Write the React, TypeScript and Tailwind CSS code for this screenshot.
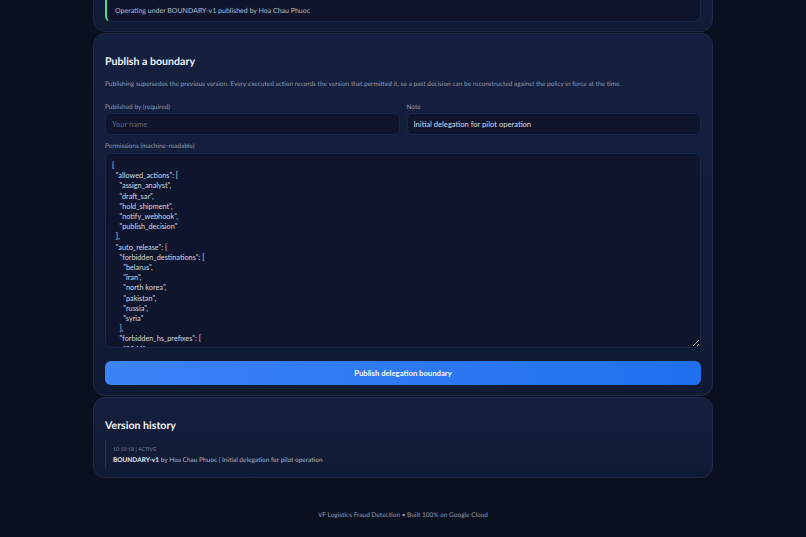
const permissions = `{
  "allowed_actions": [
    "assign_analyst",
    "draft_sar",
    "hold_shipment",
    "notify_webhook",
    "publish_decision"
  ],
  "auto_release": {
    "forbidden_destinations": [
      "belarus",
      "iran",
      "north korea",
      "pakistan",
      "russia",
      "syria"
    ],
    "forbidden_hs_prefixes": [
      "2844",
      "8401"
    ]
  }
}`

const card = "mx-auto w-[620px] shrink-0 rounded-xl border border-[#1e2a4a] bg-gradient-to-b from-[#15203f] to-[#111a33] px-[11px]"
const field = "block h-[22px] w-full rounded-md border border-[#1b2646] bg-[#0e152c] px-[6px] text-[7.6px] text-[#d5dbe6] outline-none placeholder:text-[#5f6b82]"
const label = "block text-[6.5px] leading-[10px] text-[#8f9bb0]"

export default function App() {
  return (
    <div className="flex h-[537px] flex-col justify-end overflow-hidden bg-[#0b1021] font-['Lato',sans-serif] [text-rendering:geometricPrecision]">
      <div className={card + " pb-[9px]"}>
        <div className="flex h-[46px] items-end rounded-md border border-l-2 border-[#1b2646] border-l-[#4ade80] bg-[#0e152c] px-[8px] pb-[5.5px]">
          <span className="text-[7px] leading-[10px] text-[#b4bdcc]">Operating under BOUNDARY-v1 published by Hoa Chau Phuoc</span>
        </div>
      </div>

      <section className={card + " mt-px pb-[10px] pt-[21px]"}>
        <h2 className="text-[10.6px] font-bold leading-[14px] text-[#f1f5f9]">Publish a boundary</h2>
        <p className="mt-[10.5px] text-[6.5px] leading-[10px] text-[#8f9bb0]">
          Publishing supersedes the previous version. Every executed action records the version that permitted it, so a past decision can be reconstructed against the policy in force at the time.
        </p>
        <div className="mt-[13.5px] grid grid-cols-2 gap-[7px]">
          <div>
            <label className={label}>Published by (required)</label>
            <input className={field} placeholder="Your name" />
          </div>
          <div>
            <label className={label}>Note</label>
            <input className={field} defaultValue="Initial delegation for pilot operation" />
          </div>
        </div>
        <label className={label + " mb-px mt-[7px]"}>Permissions (machine-readable)</label>
        <textarea
          readOnly
          defaultValue={permissions}
          className="block h-[195px] w-full resize-y overflow-hidden rounded-md border border-[#1b2646] bg-[#0e152c] px-[6px] pb-[5px] pt-[7px] text-[7.3px] leading-[10.2px] text-[#d5dbe6] outline-none"
        />
        <button className="mt-[13px] h-[24px] w-full rounded-md bg-gradient-to-r from-[#3b82f6] to-[#2070f0] pt-px text-[7.7px] font-bold text-[#f8fafc]">
          Publish delegation boundary
        </button>
      </section>

      <section className={card + " mt-px pb-[9px] pt-[20.5px]"}>
        <h2 className="text-[10.6px] font-bold leading-[14px] text-[#f1f5f9]">Version history</h2>
        <div className="mt-[7.5px] border-l border-[#25304f] pb-[1.5px] pl-[7px] pt-[6px]">
          <div className="text-[5.3px] leading-[8px] text-[#6f7b92]">10:19:18 | ACTIVE</div>
          <div className="mt-[0.5px] text-[6.5px] leading-[12px] text-[#aab4c5]">
            <strong className="font-bold text-[#e2e8f0]">BOUNDARY-v1</strong> by Hoa Chau Phuoc | Initial delegation for pilot operation
          </div>
        </div>
      </section>

      <footer className="flex h-[59px] shrink-0 items-center justify-center pt-[17px] text-[6.5px] text-[#8f9bb0]">
        VF Logistics Fraud Detection • Built 100% on Google Cloud
      </footer>
    </div>
  )
}
